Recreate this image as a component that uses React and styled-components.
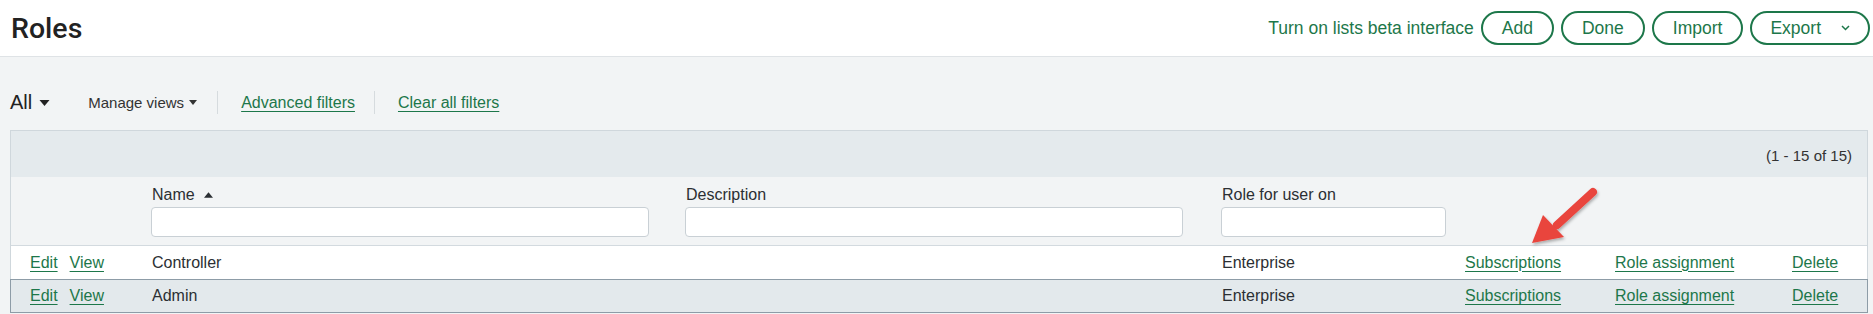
import React from "react";
import styled, { createGlobalStyle } from "styled-components";

const GREEN = "#1d774a";
const TEXT = "#2b2f33";

const Global = createGlobalStyle`
  html, body { margin: 0; padding: 0; }
  body {
    background: #f2f4f5;
    font-family: "Liberation Sans", Arial, sans-serif;
    color: ${TEXT};
  }
  * { box-sizing: border-box; }
`;

const Page = styled.div`
  position: relative;
  width: 1873px;
  min-height: 314px;
  overflow: hidden;
`;

const Header = styled.header`
  height: 57px;
  background: #fff;
  border-bottom: 1px solid #dfe3e6;
  display: flex;
  align-items: center;
  justify-content: space-between;
  padding: 0 3px 0 11px;
`;

const Title = styled.h1`
  margin: 0;
  font-family: Roboto, "Liberation Sans", Arial, sans-serif;
  font-size: 28.5px;
  font-weight: 500;
  color: #222;
`;

const Actions = styled.div`
  display: flex;
  align-items: center;
  gap: 7px;
`;

const BetaLink = styled.a`
  color: ${GREEN};
  font-size: 17.5px;
  text-decoration: none;
  cursor: pointer;
`;

const PillButton = styled.button`
  height: 34px;
  padding: 0 ${(p) => (p.$menu ? "18px" : "19px")};
  border: 2px solid ${GREEN};
  border-radius: 17px;
  background: #fff;
  color: ${GREEN};
  font-family: "Liberation Sans", Arial, sans-serif;
  font-size: 17.5px;
  display: flex;
  align-items: center;
  gap: 20px;
  cursor: pointer;
`;

const FilterBar = styled.div`
  height: 73px;
  padding: 18px 10px 0 10px;
  display: flex;
  align-items: center;
`;

const ViewSelect = styled.div`
  display: flex;
  align-items: center;
  gap: 7px;
  font-size: 20px;
  color: #222;
  margin-right: 38px;
`;

const Manage = styled.div`
  display: flex;
  align-items: center;
  gap: 5px;
  font-size: 15px;
  color: #333;
  padding-right: 20px;
`;

const Divider = styled.span`
  width: 1px;
  height: 23px;
  background: #d6dbde;
`;

const FilterLink = styled.a`
  font-size: 16px;
  color: ${GREEN};
  text-decoration: underline;
  text-underline-offset: 3px;
  padding: 0 19px 0 23px;
  cursor: pointer;
`;

const Caret = ({ w = 11, h = 6, up = false }) => (
  <svg width={w} height={h} viewBox="0 0 10 6" aria-hidden="true">
    <path d={up ? "M0 6 L10 6 L5 0 Z" : "M0 0 L10 0 L5 6 Z"} fill="currentColor" />
  </svg>
);

const Table = styled.div`
  margin: 0 5px 0 10px;
  border: 1px solid #cfd7dc;
  border-bottom: none;
`;

const Toolbar = styled.div`
  height: 46px;
  background: #e4eaed;
  display: flex;
  align-items: center;
  justify-content: flex-end;
  padding: 2px 15px 0 0;
  font-size: 15px;
  color: #333;
`;

const Grid = styled.div`
  display: grid;
  grid-template-columns: 141px 534px 536px 243px 150px 177px 1fr;
  align-items: center;
`;

const HeadRow = styled(Grid)`
  background: #f2f4f5;
  height: 69px;
  align-items: start;
  padding-top: 9px;
  border-bottom: 1px solid #d3dadf;
`;

const HeadCell = styled.div`
  display: flex;
  flex-direction: column;
  gap: 4px;
`;

const HeadLabel = styled.div`
  font-size: 16px;
  color: #2b2f33;
  display: flex;
  align-items: center;
  gap: 9px;
  height: 17px;
`;

const FilterInput = styled.input`
  width: ${(p) => p.$w}px;
  height: 30px;
  border: 1px solid #c9d0d5;
  border-radius: 4px;
  background: #fff;
  margin-left: -1px;
`;

const Row = styled(Grid)`
  height: ${(p) => (p.$alt ? "34px" : "33px")};
  background: ${(p) => (p.$alt ? "#e3e9ec" : "#fff")};
  border: ${(p) => (p.$alt ? "1px solid #8d9ca7" : "none")};
  margin: ${(p) => (p.$alt ? "0 -1px" : "0")};
  font-size: 16px;
  color: #2b2f33;
`;

const RowActions = styled.div`
  display: flex;
  gap: 12px;
  padding-left: 19px;
`;

const Link = styled.a`
  color: ${GREEN};
  text-decoration: underline;
  text-underline-offset: 3px;
  text-decoration-thickness: 1px;
  cursor: pointer;
`;

const Annotation = styled.svg`
  position: absolute;
  left: 1520px;
  top: 180px;
  overflow: visible;
  pointer-events: none;
`;

const rows = [
  { name: "Controller", role: "Enterprise" },
  { name: "Admin", role: "Enterprise", alt: true },
];

export default function App() {
  return (
    <Page>
      <Global />
      <Header>
        <Title>Roles</Title>
        <Actions>
          <BetaLink>Turn on lists beta interface</BetaLink>
          <PillButton>Add</PillButton>
          <PillButton>Done</PillButton>
          <PillButton>Import</PillButton>
          <PillButton $menu>
            Export
            <svg width="9" height="6" viewBox="0 0 9 6" aria-hidden="true">
              <path d="M1 1 L4.5 4.5 L8 1" fill="none" stroke={GREEN} strokeWidth="1.5" />
            </svg>
          </PillButton>
        </Actions>
      </Header>

      <FilterBar>
        <ViewSelect>
          All <Caret />
        </ViewSelect>
        <Manage>
          Manage views <Caret w={8} h={5} />
        </Manage>
        <Divider />
        <FilterLink>Advanced filters</FilterLink>
        <Divider />
        <FilterLink>Clear all filters</FilterLink>
      </FilterBar>

      <Table>
        <Toolbar>(1 - 15 of 15)</Toolbar>
        <HeadRow>
          <div />
          <HeadCell>
            <HeadLabel>
              Name <Caret w={9} h={6} up />
            </HeadLabel>
            <FilterInput $w={498} />
          </HeadCell>
          <HeadCell>
            <HeadLabel>Description</HeadLabel>
            <FilterInput $w={498} />
          </HeadCell>
          <HeadCell>
            <HeadLabel>Role for user on</HeadLabel>
            <FilterInput $w={225} />
          </HeadCell>
          <div />
          <div />
          <div />
        </HeadRow>
        {rows.map((r) => (
          <Row key={r.name} $alt={r.alt}>
            <RowActions>
              <Link>Edit</Link>
              <Link>View</Link>
            </RowActions>
            <div>{r.name}</div>
            <div />
            <div>{r.role}</div>
            <div>
              <Link>Subscriptions</Link>
            </div>
            <div>
              <Link>Role assignment</Link>
            </div>
            <div>
              <Link>Delete</Link>
            </div>
          </Row>
        ))}
      </Table>

      <Annotation width="90" height="80" viewBox="0 0 90 80">
        <defs>
          <filter id="sh" x="-30%" y="-30%" width="160%" height="160%">
            <feDropShadow dx="1" dy="2" stdDeviation="1.5" floodColor="#000" floodOpacity="0.3" />
          </filter>
        </defs>
        <g filter="url(#sh)">
          <line x1="73" y1="12" x2="37" y2="45" stroke="#e9443d" strokeWidth="8" strokeLinecap="round" />
          <path d="M12 63 L23 35 L44 57 Z" fill="#e9443d" />
        </g>
      </Annotation>
    </Page>
  );
}
